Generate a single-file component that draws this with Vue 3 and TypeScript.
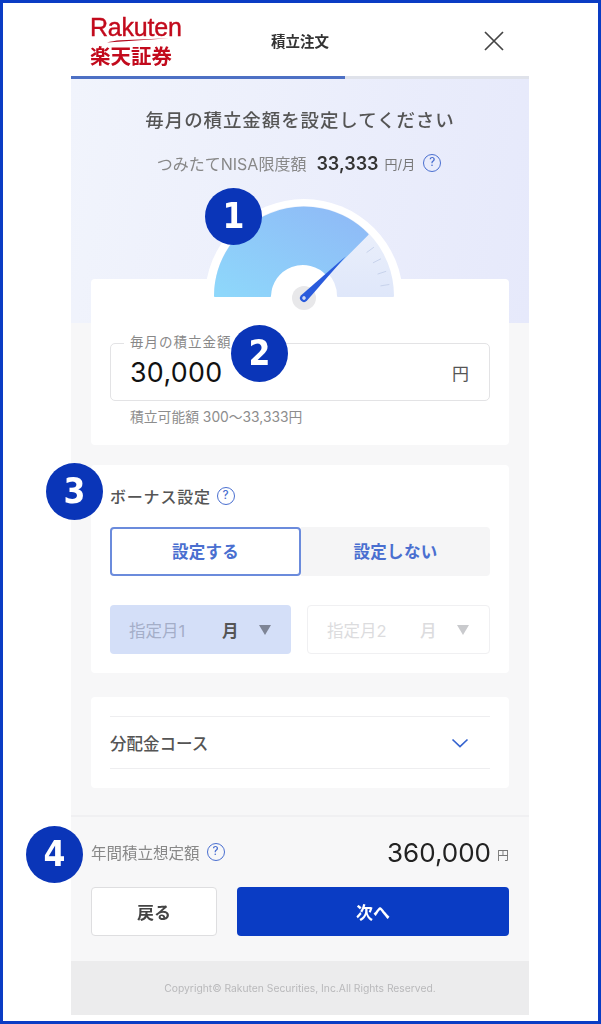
<script setup lang="ts">
// 積立注文 — 毎月の積立金額の設定画面（番号付きの説明画像）
const needleAngle = 45
const ticks = [54, 63, 72, 81].map((a) => {
  const r = (a * Math.PI) / 180
  return {
    x1: 90 * Math.sin(r) * 0.86,
    y1: -90 * Math.cos(r) * 0.86,
    x2: 90 * Math.sin(r) * 0.96,
    y2: -90 * Math.cos(r) * 0.96,
  }
})
const markers = [
  { n: 1, cls: 'm1' },
  { n: 2, cls: 'm2' },
  { n: 3, cls: 'm3' },
  { n: 4, cls: 'm4' },
]
</script>

<template>
  <div class="frame">
    <div class="phone">
      <header class="head">
        <div class="logo">
          <span class="logo-en">Rakuten</span>
          <svg class="swoosh" width="62" height="5" viewBox="0 0 62 5" aria-hidden="true">
            <path d="M0 4.6 L62 0.2 L14 2.2 Q5 2.8 0 4.6Z" fill="#b3071c" />
          </svg>
          <span class="logo-ja">楽天証券</span>
        </div>
        <span class="head-title">積立注文</span>
        <svg class="close" width="22" height="22" viewBox="0 0 22 22" aria-label="閉じる">
          <path d="M2 2 L20 20 M20 2 L2 20" stroke="#444" stroke-width="1.7" fill="none" />
        </svg>
      </header>
      <div class="progress"><div class="progress-fill"></div></div>

      <main class="body">
        <section class="hero">
          <h1 class="hero-title">毎月の積立金額を設定してください</h1>
          <div class="limit">
            <span class="limit-label">つみたてNISA限度額</span>
            <b class="limit-num">33,333</b>
            <span class="limit-unit">円/月</span>
            <span class="help">?</span>
          </div>
          <svg class="gauge" width="210" height="118" viewBox="-105 -102 210 118" aria-hidden="true">
            <defs>
              <linearGradient id="arcFill" x1="0" y1="1" x2="1" y2="0">
                <stop offset="0" stop-color="#8ed8fb" />
                <stop offset="1" stop-color="#8fb8f6" />
              </linearGradient>
              <linearGradient id="arcRest" x1="0" y1="0" x2="0" y2="1">
                <stop offset="0" stop-color="#eef2fb" />
                <stop offset="1" stop-color="#dfe7fa" />
              </linearGradient>
            </defs>
            <path d="M-99 0 A99 99 0 0 1 99 0Z" fill="#fff" />
            <path
              d="M-89 -2 A89 89 0 0 1 89 -2 L34 -2 A34 34 0 0 0 -34 -2Z"
              fill="url(#arcRest)"
              stroke="url(#arcRest)"
              stroke-width="2"
              stroke-linejoin="round"
            />
            <path
              d="M-89 -2 A89 89 0 0 1 63.6 -63.6 L23.3 -23.3 A33 33 0 0 0 -34 -2Z"
              fill="url(#arcFill)"
              stroke="url(#arcFill)"
              stroke-width="2"
              stroke-linejoin="round"
            />
            <line
              v-for="(t, i) in ticks"
              :key="i"
              :x1="t.x1"
              :y1="t.y1"
              :x2="t.x2"
              :y2="t.y2"
              stroke="#c8d3ec"
              stroke-width="1"
            />
            <circle cx="0" cy="0" r="12" fill="#e8e8ea" />
            <g :transform="`rotate(${needleAngle} 0 0)`">
              <path d="M0 -59 L4 0 A4 4 0 0 1 -4 0Z" fill="#2a5bdc" />
              <circle cx="0" cy="0" r="1.8" fill="#cfd9f5" />
            </g>
          </svg>
        </section>

        <section class="card card-amount">
          <div class="field">
            <span class="field-label">毎月の積立金額</span>
            <span class="field-value">30,000</span>
            <span class="field-unit">円</span>
          </div>
          <p class="hint">積立可能額 300〜33,333円</p>
        </section>

        <section class="card card-bonus">
          <div class="bonus-label"><span>ボーナス設定</span><span class="help">?</span></div>
          <div class="segment">
            <div class="seg seg-on">設定する</div>
            <div class="seg seg-off">設定しない</div>
          </div>
          <div class="months">
            <div class="month month-on">
              <span class="month-name">指定月1</span>
              <span class="month-unit">月</span>
              <span class="tri"></span>
            </div>
            <div class="month month-off">
              <span class="month-name">指定月2</span>
              <span class="month-unit">月</span>
              <span class="tri"></span>
            </div>
          </div>
        </section>

        <section class="card card-course">
          <div class="course">
            <span>分配金コース</span>
            <svg width="18" height="10" viewBox="0 0 18 10" aria-hidden="true">
              <path d="M1.5 1.5 L9 8.5 L16.5 1.5" stroke="#3563cf" stroke-width="1.7" fill="none" />
            </svg>
          </div>
        </section>

        <section class="summary">
          <div class="summary-row">
            <span class="summary-label">年間積立想定額</span>
            <span class="help">?</span>
            <span class="summary-num">360,000</span>
            <span class="summary-unit">円</span>
          </div>
          <div class="actions">
            <button class="btn btn-back">戻る</button>
            <button class="btn btn-next">次へ</button>
          </div>
        </section>
      </main>

      <footer class="foot">Copyright© Rakuten Securities, Inc.All Rights Reserved.</footer>
    </div>

    <span v-for="m in markers" :key="m.n" :class="['marker', m.cls]">{{ m.n }}</span>
  </div>
</template>

<style>
html,
body {
  margin: 0;
  background: #fff;
}
</style>

<style scoped>
.frame {
  position: relative;
  box-sizing: border-box;
  width: 601px;
  height: 1024px;
  padding-left: 68px;
  border: 3px solid #0a3cc4;
  background: #fff;
  font-family: Inter, "Noto Sans CJK JP", sans-serif;
  color: #444;
  overflow: hidden;
}

.phone {
  width: 458px;
  filter: blur(0.55px);
}

.head {
  display: flex;
  align-items: center;
  height: 73px;
  padding: 2px 24px 0 19px;
  box-sizing: border-box;
}

.logo {
  display: flex;
  flex-direction: column;
  width: 100px;
  color: #c20a1c;
}

.logo-en {
  font-family: "Liberation Sans", sans-serif;
  font-size: 25px;
  line-height: 24px;
  letter-spacing: -0.2px;
  -webkit-text-stroke: 0.4px #c20a1c;
}

.swoosh {
  display: block;
  margin: -1px 0 1px 17px;
}

.logo-ja {
  font-family: "Noto Sans CJK JP", sans-serif;
  font-size: 20.5px;
  font-weight: 700;
  line-height: 22px;
}

.head-title {
  margin-left: 81px;
  font-size: 14.5px;
  font-weight: 700;
  color: #333;
}

.close {
  margin-left: auto;
}

.progress {
  height: 3px;
  background: #dfe2ea;
}

.progress-fill {
  width: 274px;
  height: 100%;
  background: #4d70c4;
}

.body {
  background: #f7f7f8;
}

.hero {
  box-sizing: border-box;
  height: 244px;
  padding-top: 29px;
  text-align: center;
  background: linear-gradient(100deg, #f1f4fc 0%, #e6e9fb 100%);
}

.hero-title {
  margin: 0;
  font-size: 18.5px;
  font-weight: 500;
  line-height: 24px;
  letter-spacing: 0.9px;
  color: #555;
}

.limit {
  display: flex;
  align-items: center;
  justify-content: center;
  height: 24px;
  margin-top: 19px;
  padding-right: 2px;
}

.limit-label {
  font-size: 16px;
  color: #888;
}

.limit-num {
  margin-left: 10px;
  font-size: 18px;
  font-weight: 600;
  color: #333;
}

.limit-unit {
  margin: 0 8px 0 6px;
  font-size: 13px;
  color: #777;
}

.help {
  display: inline-flex;
  align-items: center;
  justify-content: center;
  box-sizing: border-box;
  width: 18px;
  height: 18px;
  border: 1.5px solid #4a6fd0;
  border-radius: 50%;
  font-size: 11.5px;
  font-weight: 500;
  line-height: 1;
  color: #4a6fd0;
}

.gauge {
  position: relative;
  z-index: 2;
  display: block;
  margin: 21px 0 0 128px;
}

.card {
  position: relative;
  box-sizing: border-box;
  margin: 20px 20px 0;
  padding: 0 19px;
  border-radius: 4px;
  background: #fff;
}

.card-amount {
  height: 166px;
  margin-top: -44px;
  padding-top: 64px;
}

.field {
  display: flex;
  align-items: center;
  position: relative;
  box-sizing: border-box;
  height: 58px;
  padding: 0 20px 0 19px;
  border: 1.5px solid #e3e3e5;
  border-radius: 5px;
}

.field-label {
  position: absolute;
  top: -11px;
  left: 13px;
  padding: 0 6px;
  background: #fff;
  font-size: 13.5px;
  line-height: 18px;
  letter-spacing: 1px;
  color: #888;
}

.field-value {
  font-size: 26.8px;
  font-weight: 400;
  letter-spacing: 0.3px;
  color: #111;
}

.field-unit {
  margin-left: auto;
  font-size: 17px;
  color: #555;
}

.hint {
  margin: 7px 0 0 20px;
  font-size: 13.8px;
  line-height: 18px;
  color: #8d8d8d;
}

.card-bonus {
  height: 208px;
  padding-top: 20px;
}

.bonus-label {
  display: flex;
  align-items: center;
  gap: 6px;
  height: 22px;
  font-size: 16px;
  letter-spacing: 0.8px;
  font-weight: 500;
  color: #555;
}

.segment {
  display: flex;
  margin-top: 20px;
  height: 49px;
}

.seg {
  display: flex;
  align-items: center;
  justify-content: center;
  box-sizing: border-box;
  padding-bottom: 2px;
  font-size: 16.5px;
  letter-spacing: 0.3px;
  font-weight: 700;
  color: #4a6fd0;
}

.seg-on {
  width: 191px;
  border: 2px solid #6b8bdc;
  border-radius: 4px;
  background: #fff;
}

.seg-off {
  flex: 1;
  border-radius: 0 4px 4px 0;
  background: #f5f5f6;
}

.months {
  display: grid;
  grid-template-columns: 181px 183px;
  gap: 16px;
  margin-top: 29px;
}

.month {
  display: flex;
  align-items: center;
  box-sizing: border-box;
  height: 49px;
  padding: 0 20px 0 19px;
  border-radius: 4px;
  font-size: 16.5px;
}

.month-on {
  background: #d4dff8;
  color: #a4aec8;
}

.month-off {
  border: 1.5px solid #f0f0f2;
  color: #dcdcde;
}

.month-name {
  width: 93px;
}

.month-unit {
  font-weight: 500;
}

.month-on .month-unit {
  font-weight: 700;
  color: #555;
}

.tri {
  margin-left: auto;
  width: 0;
  height: 0;
  border-left: 6px solid transparent;
  border-right: 6px solid transparent;
  border-top: 10px solid #7e8596;
}

.month-off .tri {
  border-top-color: #c9cacd;
}

.card-course {
  height: 91px;
  margin-top: 24px;
  padding-top: 19px;
}

.course {
  display: flex;
  align-items: center;
  justify-content: space-between;
  box-sizing: border-box;
  height: 53px;
  padding: 0 21px 0 0;
  border-top: 1.5px solid #eeeef0;
  border-bottom: 1.5px solid #eeeef0;
  font-size: 16.5px;
  font-weight: 500;
  color: #555;
}

.summary {
  box-sizing: border-box;
  height: 146px;
  margin-top: 27px;
  padding: 0 20px;
  border-top: 2px solid #f0f0f2;
}

.summary-row {
  display: flex;
  align-items: center;
  height: 70px;
}

.summary-label {
  margin-right: 7px;
  font-size: 15.5px;
  color: #888;
}

.summary-num {
  margin-left: auto;
  font-size: 26px;
  font-weight: 400;
  color: #222;
}

.summary-unit {
  margin: 4px 0 0 6px;
  font-size: 12px;
  color: #777;
}

.actions {
  display: flex;
  gap: 20px;
}

.btn {
  height: 49px;
  border-radius: 4px;
  font-family: inherit;
  font-size: 17px;
  font-weight: 700;
}

.btn-back {
  width: 126px;
  border: 1.5px solid #dedee0;
  background: #fff;
  color: #444;
}

.btn-next {
  flex: 1;
  border: 0;
  background: #0a3cc4;
  color: #fff;
}

.foot {
  height: 54px;
  font-size: 10.3px;
  line-height: 54px;
  text-align: center;
  background: #ececed;
  color: #b9b9bb;
}

.marker {
  position: absolute;
  display: flex;
  align-items: center;
  justify-content: center;
  width: 57px;
  height: 57px;
  border-radius: 50%;
  background: #0a35b8;
  color: #fff;
  font-family: "DejaVu Sans", sans-serif;
  font-size: 35px;
  font-stretch: condensed;
  font-weight: 700;
  line-height: 1;
}

.m1 { left: 202px; top: 185px; }
.m2 { left: 228px; top: 322px; }
.m3 { left: 43px; top: 460px; }
.m4 { left: 23px; top: 823px; }
</style>
